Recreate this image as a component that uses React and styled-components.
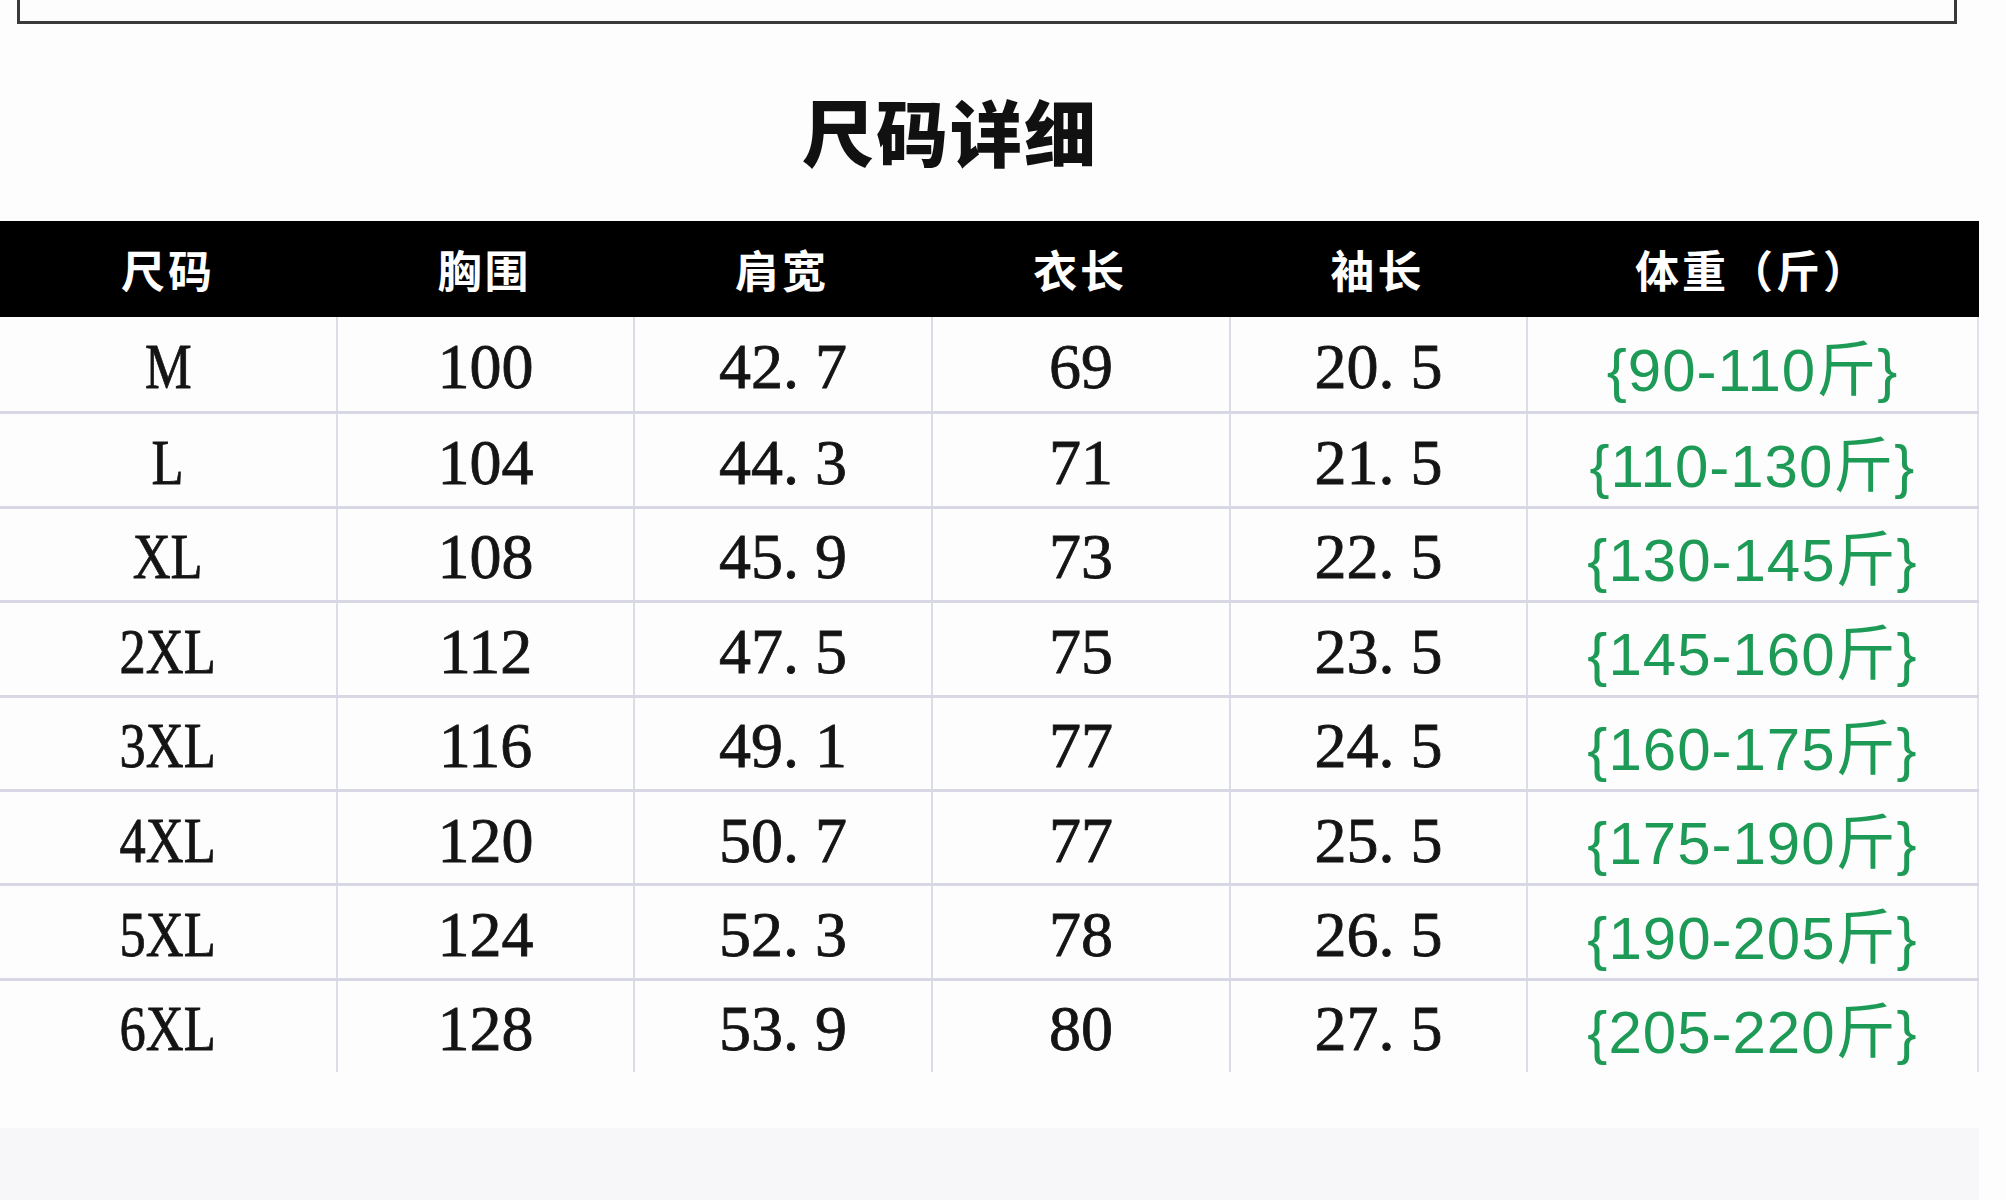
import React from 'react';
import styled, { createGlobalStyle } from 'styled-components';

const GlobalStyle = createGlobalStyle`
  html, body {
    margin: 0;
    padding: 0;
    background: #fdfdfd;
  }
`;

const columns = ['尺码', '胸围', '肩宽', '衣长', '袖长', '体重（斤）'];

const rows = [
  ['M', '100', '42.7', '69', '20.5', '{90-110斤}'],
  ['L', '104', '44.3', '71', '21.5', '{110-130斤}'],
  ['XL', '108', '45.9', '73', '22.5', '{130-145斤}'],
  ['2XL', '112', '47.5', '75', '23.5', '{145-160斤}'],
  ['3XL', '116', '49.1', '77', '24.5', '{160-175斤}'],
  ['4XL', '120', '50.7', '77', '25.5', '{175-190斤}'],
  ['5XL', '124', '52.3', '78', '26.5', '{190-205斤}'],
  ['6XL', '128', '53.9', '80', '27.5', '{205-220斤}'],
];

// half-width dot like the original sheet font
const Value = ({ text }) => {
  if (!text.includes('.')) return text;
  const [a, b] = text.split('.');
  return (
    <>
      {a}
      <Dot>.</Dot>
      {b}
    </>
  );
};

const App = () => {
  return (
    <Page>
      <GlobalStyle />
      <FrameEdge />
      <Title>尺码详细</Title>
      <Table>
        <HeadRow>
          {columns.map((c) => (
            <HeadCell key={c}>{c}</HeadCell>
          ))}
        </HeadRow>
        {rows.map((r) => (
          <BodyRow key={r[0]}>
            <Cell>
              <SizeLabel>{r[0]}</SizeLabel>
            </Cell>
            {r.slice(1, 5).map((v, i) => (
              <Cell key={i}>
                <Value text={v} />
              </Cell>
            ))}
            <Cell $green>{r[5]}</Cell>
          </BodyRow>
        ))}
      </Table>
      <Footer />
    </Page>
  );
};

export default App;

const Page = styled.div`
  width: 2006px;
  height: 1200px;
  overflow: hidden;
  background: #fdfdfd;
`;

const FrameEdge = styled.div`
  box-sizing: border-box;
  margin-left: 17px;
  width: 1940px;
  height: 24px;
  border: 3px solid #3a3a3a;
  border-top: none;
`;

const Title = styled.div`
  margin-top: 68px;
  padding-right: 106px;
  text-align: center;
  font-family: 'Noto Sans CJK SC', sans-serif;
  font-weight: 900;
  font-size: 72px;
  line-height: 76px;
  letter-spacing: 2px;
  color: #111;
`;

const Table = styled.div`
  margin-top: 53px;
  width: 1979px;
`;

const grid = `
  display: grid;
  grid-template-columns: 336px 297px 298px 298px 297px 453px;
`;

const HeadRow = styled.div`
  ${grid}
  height: 96px;
  background: #000;
`;

const HeadCell = styled.div`
  display: flex;
  align-items: center;
  justify-content: center;
  color: #fff;
  font-family: 'Noto Sans CJK SC', sans-serif;
  font-weight: 700;
  font-size: 44px;
  letter-spacing: 3px;
`;

const BodyRow = styled.div`
  ${grid}
  height: 94.4px;
  box-sizing: border-box;
  & + & {
    border-top: 3px solid #d8d8e4;
  }
`;

const Cell = styled.div`
  display: flex;
  align-items: center;
  justify-content: center;
  padding-top: ${(p) => (p.$green ? '0' : '6px')};
  box-sizing: border-box;
  border-left: 2px solid #dcdce8;
  color: ${(p) => (p.$green ? '#1d9a55' : '#141414')};
  font-family: ${(p) =>
    p.$green
      ? "'Liberation Sans', 'Noto Sans CJK SC', sans-serif"
      : "'Liberation Serif', 'Noto Sans CJK SC', serif"};
  font-size: ${(p) => (p.$green ? '60px' : '64px')};
  letter-spacing: ${(p) => (p.$green ? '1px' : '0')};
  -webkit-text-stroke: ${(p) => (p.$green ? '0' : '0.8px #141414')};
  white-space: nowrap;

  &:first-child {
    border-left: none;
  }
  &:last-child {
    border-right: 2px solid #e2e2ec;
  }
`;

const SizeLabel = styled.span`
  display: inline-block;
  transform: scaleX(0.82);
`;

const Dot = styled.span`
  display: inline-block;
  width: 0.5em;
  text-align: left;
`;

const Footer = styled.div`
  margin-top: 56px;
  width: 1979px;
  height: 72px;
  background: #f7f7f9;
`;
